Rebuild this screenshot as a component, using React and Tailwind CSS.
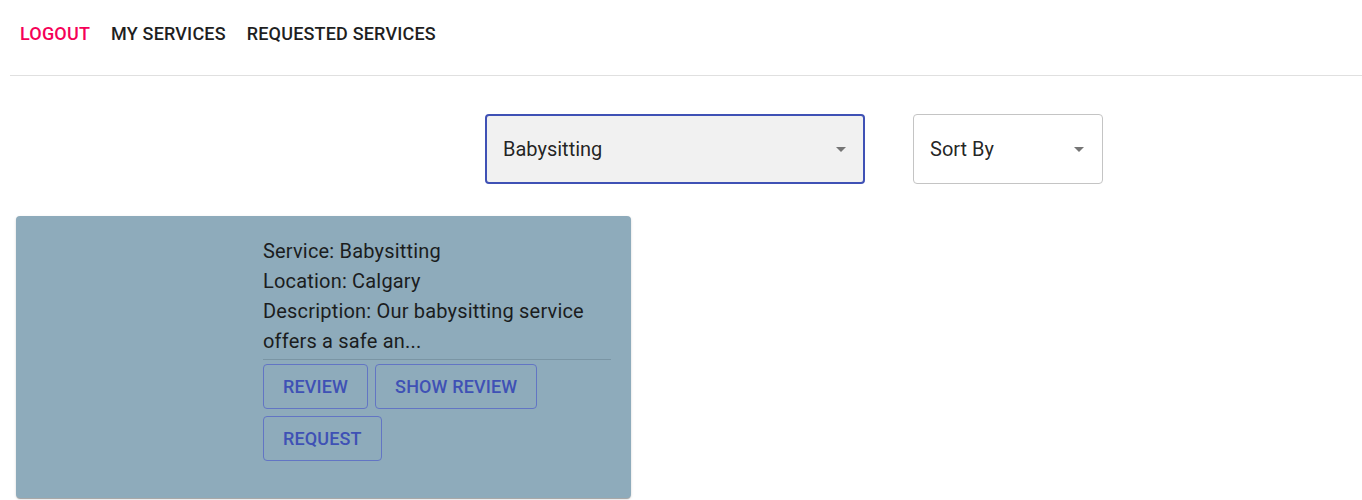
import React from "react";

function Arrow() {
  return (
    <svg width="24" height="24" viewBox="0 0 24 24" className="text-[#757575]" fill="currentColor">
      <path d="M7 10l5 5 5-5z" />
    </svg>
  );
}

function OutlinedBtn({ children }) {
  return (
    <button className="h-[45px] px-[19px] rounded-[4px] border border-[#6275c4] text-[#3f51b5] text-[18px] font-medium uppercase tracking-[0.008em] leading-none">
      {children}
    </button>
  );
}

export default function App() {
  return (
    <div className="w-[1362px] min-h-[500px] bg-white pl-[10px] font-['Roboto',sans-serif] text-[rgba(0,0,0,0.87)]">
      <nav className="h-[76px] flex items-center gap-[1px] border-b border-[#e0e0e0] pb-[9px]">
        <button className="px-[10px] py-[6px] text-[18px] font-medium uppercase tracking-[0.01em] text-[#f50057]">Logout</button>
        <button className="px-[10px] py-[6px] text-[18px] font-medium uppercase tracking-[0.01em] text-[#1f1f1f]">My Services</button>
        <button className="px-[10px] py-[6px] text-[18px] font-medium uppercase tracking-[0.01em] text-[#1f1f1f]">Requested Services</button>
      </nav>
      <div className="flex mt-[38px] ml-[475px] gap-[48px]">
        <div className="w-[380px] h-[70px] rounded-[4px] border-2 border-[#3f51b5] bg-[#f1f1f1] flex items-center justify-between pl-[16px] pr-[10px]">
          <span className="text-[20px]">Babysitting</span>
          <Arrow />
        </div>
        <div className="w-[190px] h-[70px] rounded-[4px] border border-[#c4c4c4] bg-white flex items-center justify-between pl-[16px] pr-[11px]">
          <span className="text-[20px]">Sort By</span>
          <Arrow />
        </div>
      </div>
      <div className="mt-[32px] ml-[6px] w-[615px] h-[282px] rounded-[4px] bg-[#8eabbb] shadow-[0_2px_1px_-1px_rgba(0,0,0,0.2),0_1px_1px_0_rgba(0,0,0,0.14),0_1px_3px_0_rgba(0,0,0,0.12)] flex">
        <div className="w-[247px] shrink-0" />
        <div className="pt-[20px] w-[348px]">
          <div className="text-[20px] tracking-[0.00938em] leading-[30px] text-[#1b1d1e]">
            <p>Service: Babysitting</p>
            <p>Location: Calgary</p>
            <p>Description: Our babysitting service offers a safe an...</p>
          </div>
          <div className="border-t border-[#7a95a4] mt-[3px] pt-[4px] flex flex-col gap-[7px]">
            <div className="flex gap-[7px]">
              <OutlinedBtn>Review</OutlinedBtn>
              <OutlinedBtn>Show Review</OutlinedBtn>
            </div>
            <div className="flex">
              <OutlinedBtn>Request</OutlinedBtn>
            </div>
          </div>
        </div>
      </div>
    </div>
  );
}
